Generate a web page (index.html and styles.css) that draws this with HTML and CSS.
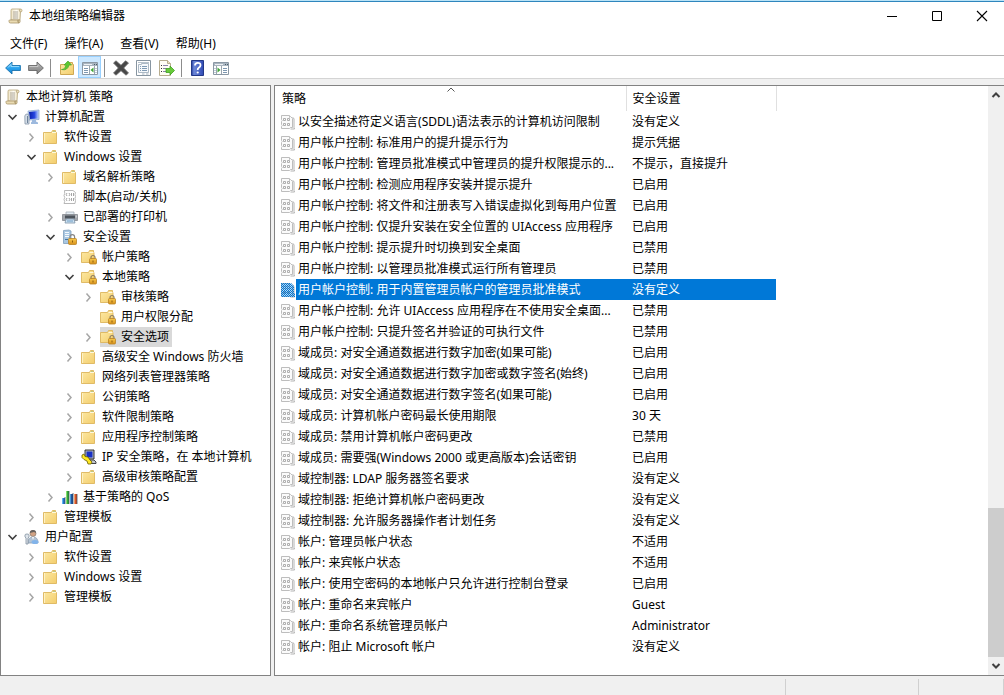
FILE: index.html
```html
<!DOCTYPE html>
<html lang="zh-CN">
<head>
<meta charset="utf-8">
<meta name="viewport" content="width=device-width, initial-scale=1">
<title>本地组策略编辑器</title>
<link rel="stylesheet" href="styles.css">
</head>
<body>
<svg class="sprite" aria-hidden="true">
  <defs>
    <linearGradient id="g-folder" x1="0" y1="0" x2="1" y2="1"><stop offset="0" stop-color="#fdeaa6"/><stop offset="1" stop-color="#f3cd6c"/></linearGradient>
    <linearGradient id="g-paper" x1="0" y1="0" x2="1" y2="0"><stop offset="0" stop-color="#efe3c4"/><stop offset=".5" stop-color="#fffdf6"/><stop offset="1" stop-color="#e6d7ae"/></linearGradient>
    <linearGradient id="g-lock" x1="0" y1="0" x2="0" y2="1"><stop offset="0" stop-color="#f8c94c"/><stop offset="1" stop-color="#d8911b"/></linearGradient>
    <linearGradient id="g-blue" x1="0" y1="0" x2="0" y2="1"><stop offset="0" stop-color="#7fd0fa"/><stop offset=".5" stop-color="#2ba3ee"/><stop offset="1" stop-color="#1583d2"/></linearGradient>
    <linearGradient id="g-gray" x1="0" y1="0" x2="0" y2="1"><stop offset="0" stop-color="#b8b8b8"/><stop offset="1" stop-color="#7c7c7c"/></linearGradient>
    <linearGradient id="g-screen" x1="0" y1="0" x2="1" y2="0"><stop offset="0" stop-color="#0a20a8"/><stop offset=".6" stop-color="#2444e0"/><stop offset="1" stop-color="#a9c2fb"/></linearGradient>
    <linearGradient id="g-help" x1="0" y1="0" x2="1" y2="0"><stop offset="0" stop-color="#20389a"/><stop offset=".2" stop-color="#6c87d8"/><stop offset="1" stop-color="#2f49b4"/></linearGradient>
    <pattern id="p-select" width="2" height="2" patternUnits="userSpaceOnUse"><path d="M0 0h1v1H0zM1 1h1v1H1z" fill="#0078d7"/></pattern>
  </defs>
  <symbol id="i-scroll" viewBox="0 0 16 16">
    <path d="M4 1h8.500q1.500 0 1.500 1.500T12.500 4L12 12H3V2.500Q3 1 4 1z" fill="url(#g-paper)" stroke="#b5a47a" stroke-width=".8"/>
    <path d="M1.500 12H10q0 3 1 3H2.500Q1 15 1 13.500T1.500 12zM10 12h2q.5 3-1 3t-1-3z" fill="#eadbb2" stroke="#a8966a" stroke-width=".8"/>
    <path d="M12 1.200q-1 1.300.3 2.800" fill="none" stroke="#a8966a" stroke-width=".8"/>
    <path d="M5 4h5M5 6h5M5 8h5M5 10h5" stroke="#a39c8e" stroke-width=".9"/>
  </symbol>
  <symbol id="i-folder" viewBox="0 0 16 16">
    <path d="M.5 3.500h8l1-2h3v2h1v11H.5z" fill="url(#g-folder)" stroke="#dcb65c" stroke-width=".9"/>
    <path d="M9 3.500h4" stroke="#fff8dd"/><path d="M10 2.500h2" stroke="#b9c98a"/>
    <path d="M1.500 4v10" stroke="#fff5d2" stroke-width=".8"/>
  </symbol>
  <symbol id="i-lockfolder" viewBox="0 0 16 16">
    <path d="M.5 3.500h7l1-2h4v2h.5v10H.5z" fill="url(#g-folder)" stroke="#dcb65c" stroke-width=".9"/>
    <path d="M8.500 3.500h4" stroke="#fff8dd"/>
    <path d="M10 10V8.500a2 2 0 0 1 4 0V10" fill="none" stroke="#8d7f62" stroke-width="1.200"/>
    <rect x="8.500" y="9.500" width="7" height="5.500" rx="1" fill="url(#g-lock)" stroke="#b98325" stroke-width=".8"/>
    <path d="M12 11.500v2" stroke="#8d5e10"/>
  </symbol>
  <symbol id="i-computer" viewBox="0 0 16 16">
    <path d="M4 2l11-1v9.500L5 11z" fill="#b9cdea" stroke="#8fa9d2" stroke-width=".8"/>
    <path d="M5 3l9-1v7.500l-8 .5z" fill="url(#g-screen)"/>
    <path d="M8 11h4v1.500l2 1V15H7v-1.500l1-1z" fill="#9db9de"/>
    <path d="M.8 7q.5-2 2.200-2t2 2v8H1z" fill="#d5dee8" stroke="#8596a8" stroke-width=".8"/><path d="M3.500 7v7" stroke="#6f849b"/>
  </symbol>
  <symbol id="i-script" viewBox="0 0 16 16">
    <path d="M2.500 1.500h8.500l2.500 2-.5 2 .5 2-.5 2 .5 2-.5 3h-11l.7-2-.7-2 .7-2-.7-2 .7-2z" fill="#fff" stroke="#b0b0b0" stroke-width=".9"/>
    <path d="M5 4l-.8 1.500L5 7M7 4l.8 1.500L7 7M9.500 4v3M11.500 4v3M5 9l-.8 1.500L5 12M7 9l.8 1.500L7 12M9.500 9v3M11.500 9v3" fill="none" stroke="#9a9a9a" stroke-width=".9"/>
  </symbol>
  <symbol id="i-printer" viewBox="0 0 16 16">
    <path d="M4 3h8v3H4z" fill="#e4edf4" stroke="#a4adb6" stroke-width=".8"/>
    <path d="M.5 5.500h15v6H.5z" fill="#a2a6ac" stroke="#85898f" stroke-width=".8"/>
    <path d="M3 6.500h10v3H3z" fill="#4c535b"/><path d="M4 10h8l1 4H3z" fill="#cde2f3" stroke="#7c93a6" stroke-width=".8"/>
    <path d="M5 12h6" stroke="#6f9bc0"/><path d="M14.200 6.500v2" stroke="#e0e1e2"/>
  </symbol>
  <symbol id="i-security" viewBox="0 0 16 16">
    <path d="M1.500 1.500L7 1l2 1v12.500H1.500z" fill="#a9c7e2" stroke="#7f9fbd" stroke-width=".8"/>
    <path d="M3 3.500h4M3 5.500h4M3 7.500h4" stroke="#f4f9fd"/><path d="M3 10.500h3" stroke="#4576a2"/>
    <path d="M8 10V8a2.300 2.300 0 0 1 4.600 0v2" fill="none" stroke="#858585" stroke-width="1.200"/>
    <rect x="6.500" y="9.500" width="8" height="6" rx="1" fill="url(#g-lock)" stroke="#b98325" stroke-width=".8"/><path d="M10.500 11.500v2" stroke="#8d5e10"/>
  </symbol>
  <symbol id="i-ipsec" viewBox="0 0 16 16">
    <path d="M4 1h9v9H4z" fill="#b6bbc3" stroke="#222" stroke-width=".9"/>
    <path d="M5.500 2.500h6v6h-6z" fill="#1931c5"/><path d="M8 11h5l2 2v1.500H8z" fill="#c2c7ce" stroke="#333" stroke-width=".9"/>
    <path d="M1 6l2-1 1 2.500L7 8l2 3 2 2-1 2H7l-1-3-3-1.500-2-2z" fill="#ffe824" stroke="#695e00" stroke-width=".8"/>
  </symbol>
  <symbol id="i-qos" viewBox="0 0 16 16">
    <path d="M0 9h3v6H0z" fill="#2675c9"/><path d="M4 2h3v13H4z" fill="#35a83a"/><path d="M8 5h3v10H8z" fill="#20559d"/><path d="M12 5h3v10h-3z" fill="#d8552a"/>
    <path d="M.5 9v6" stroke="#5fb2ee"/><path d="M4.500 2v13" stroke="#86dd6c"/><path d="M8.500 5v10" stroke="#4c9ad8"/><path d="M12.500 5v10" stroke="#f19a67"/><path d="M3 8v7M7 2v13M11 4v11M15 5v10" stroke="#263b4b" stroke-width=".7"/>
  </symbol>
  <symbol id="i-user" viewBox="0 0 16 16">
    <circle cx="9" cy="4.500" r="3" fill="#d2a283" stroke="#8a7b70" stroke-width=".7"/>
    <path d="M5.800 4q0-3 3.200-3t3 3L10 3z" fill="#67625e"/>
    <path d="M4 14q0-6 5-6t5 6z" fill="#b3c3d4" stroke="#8d9fb2" stroke-width=".8"/><path d="M8 8l1 3 1-3" fill="#fff"/>
    <path d="M1 6q0-1 2-1t2 1v2L4 9v6H2V9L1 8z" fill="#dfe5eb" stroke="#8190a0" stroke-width=".8"/>
    <ellipse cx="11" cy="13" rx="3.500" ry="2" fill="#82b4ea"/>
  </symbol>
  <symbol id="i-policy" viewBox="0 0 16 16">
    <path d="M1.500 1.500h8v2l1-1 2 2v9h-2l-1 1h-8v-2l.7-1-.7-1v-3l.7-1-.7-1z" fill="#fbfbfb" stroke="#b5b5b5" stroke-width=".9"/>
    <path d="M12.500 3.500l1.500 1v9l.500 1.500h-4" fill="none" stroke="#aaa" stroke-width=".9"/>
    <path d="M3.500 4.500v2h2v-2zM7.500 4.500v2h2v-2zM3.500 9.500v2h2v-2zM7.500 9.500v2h2v-2z" fill="none" stroke="#a6a6a6" stroke-width=".9"/>
  </symbol>
  <symbol id="i-policy-on" viewBox="0 0 16 16"><use href="#i-policy"/><path d="M1 1h10l3 3v7h1v4H2l-1-1z" fill="#0078d7" opacity=".25"/><path d="M1 1h10l3 3v7h1v4H2l-1-1z" fill="url(#p-select)"/></symbol>
  <symbol id="i-back" viewBox="0 0 16 16"><path d="M.6 8L7 2v3.500h8.400v5H7V14z" fill="url(#g-blue)" stroke="#1972ae" stroke-width=".9"/><path d="M3 7.500l3-3v2h8" fill="none" stroke="#a4e1ff" stroke-width=".8"/></symbol>
  <symbol id="i-forward" viewBox="0 0 16 16"><path d="M15.400 8L9 2v3.500H.6v5H9V14z" fill="url(#g-gray)" stroke="#686868" stroke-width=".9"/><path d="M1.500 6.500H10v-2" fill="none" stroke="#d0d0d0" stroke-width=".8"/></symbol>
  <symbol id="i-up" viewBox="0 0 16 16"><path d="M1.500 4.500h7l1-2h4v2h1v10h-13z" fill="url(#g-folder)" stroke="#cfa852"/><path d="M2.500 9.500q3.500 0 4.500-4.500H5l4-4 3.500 4H10q-1.500 6-7.500 4.500z" fill="#5cc831" stroke="#49a52c" stroke-width=".7"/></symbol>
  <symbol id="i-console" viewBox="0 0 16 16"><path d="M.5 2.500h15v12H.5z" fill="#fff" stroke="#8b98a4"/><path d="M1 3h14v3H1z" fill="#a9b5c0"/><path d="M2 4.500h8" stroke="#fff" stroke-width=".8"/><path d="M12 4.500h1M14 4.500h1" stroke="#4b5d69"/><path d="M7.500 6v8M12.500 6v8" stroke="#9aa5ae"/><path d="M2 8.500h4M2 10.500h4M2 12.500h4M13.500 8.500h1M13.500 10.500h1M13.500 12.500h1" stroke="#7d97b0"/><path d="M11.500 7.500v5L8.500 10z" fill="#3fa535"/></symbol>
  <symbol id="i-console2" viewBox="0 0 16 16"><path d="M.5 2.500h15v12H.5z" fill="#fff" stroke="#8b98a4"/><path d="M1 3h14v3H1z" fill="#a9b5c0"/><path d="M2 4.500h8" stroke="#fff" stroke-width=".8"/><path d="M12 4.500h1M14 4.500h1" stroke="#4b5d69"/><path d="M3.500 6v8M8.500 6v8" stroke="#9aa5ae"/><path d="M1.500 8.500h1M1.500 10.500h1M1.500 12.500h1M10 8.500h4M10 10.500h4M10 12.500h4" stroke="#7d97b0"/><path d="M4.500 7.500v5l3-2.500z" fill="#3fa535"/></symbol>
  <symbol id="i-delete" viewBox="0 0 16 16"><path d="M.5 3L3 .8l5 4.500 4.500-4.500L15.500 3l-4.800 5 4.800 5-2.500 2.200-5-4.500-5 4.500L.5 13l4.800-5z" fill="#484848" stroke="#707070" stroke-width=".8"/></symbol>
  <symbol id="i-props" viewBox="0 0 16 16"><path d="M.5.5h14v15H.5z" fill="#fff" stroke="#8795a1"/><path d="M2 2.500h11" stroke="#b7c2cc"/><path d="M2.500 4.500h3v-1h7v9h-10z" fill="#f5f8fb" stroke="#a3b1be" stroke-width=".9"/><path d="M4 6.500h1M6 6.500h5M4 8.500h1M6 8.500h5M4 10.500h1M6 10.500h5" stroke="#7f9ab4"/><path d="M6 14h2.500M10 14h2.500" stroke="#a3b1be"/></symbol>
  <symbol id="i-export" viewBox="0 0 16 16"><path d="M.5.5h8l3 3v12H.5z" fill="#fffef5" stroke="#b7ac8e"/><path d="M8.500.5v3h3" fill="#eee2bf" stroke="#b7ac8e"/><path d="M2 5.500h1M2 8.500h1M2 11.500h1" stroke="#333"/><path d="M4 5.500h5M4 8.500h3M4 11.500h5" stroke="#8a83aa"/><path d="M7 8.500h4V6l4.500 4.500L11 15v-2.500H7z" fill="#67ca3a" stroke="#3fa020" stroke-width=".8"/></symbol>
  <symbol id="i-help" viewBox="0 0 16 16"><path d="M1.500.5h12v15h-12z" fill="url(#g-help)" stroke="#223787"/><path d="M5 5.500q0-2.700 2.800-2.700t2.700 2.400q0 1.300-1.500 2.300T7.700 10" fill="none" stroke="#fff" stroke-width="1.800"/><circle cx="7.700" cy="12.500" r="1.100" fill="#fff"/></symbol>
  <symbol id="i-open" viewBox="0 0 14 14"><path d="M3.500 5L7.500 9l4-4" fill="none" stroke="#404040" stroke-width="1.600"/></symbol>
  <symbol id="i-closed" viewBox="0 0 14 14"><path d="M5.500 3.500l3.500 4-3.500 4" fill="none" stroke="#a6a6a6" stroke-width="1.500"/></symbol>
  <symbol id="i-min" viewBox="0 0 12 12"><path d="M1 6.500h10" stroke="#000"/></symbol>
  <symbol id="i-max" viewBox="0 0 12 12"><path d="M1.500 1.500h9v9h-9z" fill="none" stroke="#000"/></symbol>
  <symbol id="i-close" viewBox="0 0 12 12"><path d="M1 1l10 10M11 1L1 11" stroke="#000" stroke-width="1.100"/></symbol>
</svg>

<header class="titlebar">
  <svg class="icon"><use href="#i-scroll"/></svg>
  <h1 class="title">本地组策略编辑器</h1>
  <div class="window-controls">
    <button class="window-button" aria-label="最小化"><svg><use href="#i-min"/></svg></button>
    <button class="window-button" aria-label="最大化"><svg><use href="#i-max"/></svg></button>
    <button class="window-button" aria-label="关闭"><svg><use href="#i-close"/></svg></button>
  </div>
</header>
<nav class="menu">
  <button>文件(F)</button><button>操作(A)</button><button>查看(V)</button><button>帮助(H)</button>
</nav>
<div class="toolbar" role="toolbar">
  <button class="tool" aria-label="后退"><svg class="icon"><use href="#i-back"/></svg></button>
  <button class="tool" aria-label="前进"><svg class="icon"><use href="#i-forward"/></svg></button>
  <span class="separator"></span>
  <button class="tool" aria-label="向上"><svg class="icon"><use href="#i-up"/></svg></button>
  <button class="tool tool-active" aria-label="显示控制台树" aria-pressed="true"><svg class="icon"><use href="#i-console"/></svg></button>
  <span class="separator"></span>
  <button class="tool" aria-label="删除"><svg class="icon"><use href="#i-delete"/></svg></button>
  <button class="tool" aria-label="属性"><svg class="icon"><use href="#i-props"/></svg></button>
  <button class="tool" aria-label="导出列表"><svg class="icon"><use href="#i-export"/></svg></button>
  <span class="separator"></span>
  <button class="tool" aria-label="帮助"><svg class="icon"><use href="#i-help"/></svg></button>
  <button class="tool" aria-label="显示操作窗格"><svg class="icon"><use href="#i-console2"/></svg></button>
</div>

<main class="workspace">
  <nav class="tree-pane">
    <div class="node"><span class="label"><svg class="icon"><use href="#i-scroll"/></svg>本地计算机 策略</span></div>
    <ul class="tree">
      <li><div class="node"><button class="toggle" aria-label="折叠"><svg><use href="#i-open"/></svg></button><span class="label"><svg class="icon"><use href="#i-computer"/></svg>计算机配置</span></div>
        <ul>
          <li><div class="node"><button class="toggle" aria-label="展开"><svg><use href="#i-closed"/></svg></button><span class="label"><svg class="icon"><use href="#i-folder"/></svg>软件设置</span></div></li>
          <li><div class="node"><button class="toggle" aria-label="折叠"><svg><use href="#i-open"/></svg></button><span class="label"><svg class="icon"><use href="#i-folder"/></svg>Windows 设置</span></div>
            <ul>
              <li><div class="node"><button class="toggle" aria-label="展开"><svg><use href="#i-closed"/></svg></button><span class="label"><svg class="icon"><use href="#i-folder"/></svg>域名解析策略</span></div></li>
              <li><div class="node"><span class="toggle"></span><span class="label"><svg class="icon"><use href="#i-script"/></svg>脚本(启动/关机)</span></div></li>
              <li><div class="node"><button class="toggle" aria-label="展开"><svg><use href="#i-closed"/></svg></button><span class="label"><svg class="icon"><use href="#i-printer"/></svg>已部署的打印机</span></div></li>
              <li><div class="node"><button class="toggle" aria-label="折叠"><svg><use href="#i-open"/></svg></button><span class="label"><svg class="icon"><use href="#i-security"/></svg>安全设置</span></div>
                <ul>
                  <li><div class="node"><button class="toggle" aria-label="展开"><svg><use href="#i-closed"/></svg></button><span class="label"><svg class="icon"><use href="#i-lockfolder"/></svg>帐户策略</span></div></li>
                  <li><div class="node"><button class="toggle" aria-label="折叠"><svg><use href="#i-open"/></svg></button><span class="label"><svg class="icon"><use href="#i-lockfolder"/></svg>本地策略</span></div>
                    <ul>
                      <li><div class="node"><button class="toggle" aria-label="展开"><svg><use href="#i-closed"/></svg></button><span class="label"><svg class="icon"><use href="#i-lockfolder"/></svg>审核策略</span></div></li>
                      <li><div class="node"><span class="toggle"></span><span class="label"><svg class="icon"><use href="#i-lockfolder"/></svg>用户权限分配</span></div></li>
                      <li><div class="node"><button class="toggle" aria-label="展开"><svg><use href="#i-closed"/></svg></button><span class="label label-selected"><svg class="icon"><use href="#i-lockfolder"/></svg>安全选项</span></div></li>
                    </ul>
                  </li>
                  <li><div class="node"><button class="toggle" aria-label="展开"><svg><use href="#i-closed"/></svg></button><span class="label"><svg class="icon"><use href="#i-folder"/></svg>高级安全 Windows 防火墙</span></div></li>
                  <li><div class="node"><span class="toggle"></span><span class="label"><svg class="icon"><use href="#i-folder"/></svg>网络列表管理器策略</span></div></li>
                  <li><div class="node"><button class="toggle" aria-label="展开"><svg><use href="#i-closed"/></svg></button><span class="label"><svg class="icon"><use href="#i-folder"/></svg>公钥策略</span></div></li>
                  <li><div class="node"><button class="toggle" aria-label="展开"><svg><use href="#i-closed"/></svg></button><span class="label"><svg class="icon"><use href="#i-folder"/></svg>软件限制策略</span></div></li>
                  <li><div class="node"><button class="toggle" aria-label="展开"><svg><use href="#i-closed"/></svg></button><span class="label"><svg class="icon"><use href="#i-folder"/></svg>应用程序控制策略</span></div></li>
                  <li><div class="node"><button class="toggle" aria-label="展开"><svg><use href="#i-closed"/></svg></button><span class="label"><svg class="icon"><use href="#i-ipsec"/></svg>IP 安全策略，在 本地计算机</span></div></li>
                  <li><div class="node"><button class="toggle" aria-label="展开"><svg><use href="#i-closed"/></svg></button><span class="label"><svg class="icon"><use href="#i-folder"/></svg>高级审核策略配置</span></div></li>
                </ul>
              </li>
              <li><div class="node"><button class="toggle" aria-label="展开"><svg><use href="#i-closed"/></svg></button><span class="label"><svg class="icon"><use href="#i-qos"/></svg>基于策略的 QoS</span></div></li>
            </ul>
          </li>
          <li><div class="node"><button class="toggle" aria-label="展开"><svg><use href="#i-closed"/></svg></button><span class="label"><svg class="icon"><use href="#i-folder"/></svg>管理模板</span></div></li>
        </ul>
      </li>
      <li><div class="node"><button class="toggle" aria-label="折叠"><svg><use href="#i-open"/></svg></button><span class="label"><svg class="icon"><use href="#i-user"/></svg>用户配置</span></div>
        <ul>
          <li><div class="node"><button class="toggle" aria-label="展开"><svg><use href="#i-closed"/></svg></button><span class="label"><svg class="icon"><use href="#i-folder"/></svg>软件设置</span></div></li>
          <li><div class="node"><button class="toggle" aria-label="展开"><svg><use href="#i-closed"/></svg></button><span class="label"><svg class="icon"><use href="#i-folder"/></svg>Windows 设置</span></div></li>
          <li><div class="node"><button class="toggle" aria-label="展开"><svg><use href="#i-closed"/></svg></button><span class="label"><svg class="icon"><use href="#i-folder"/></svg>管理模板</span></div></li>
        </ul>
      </li>
    </ul>
  </nav>

  <section class="list-pane">
    <div class="list-scroll">
      <table class="policies">
        <colgroup><col class="col-icon"><col class="col-name"><col class="col-setting"></colgroup>
        <thead>
          <tr><th colspan="2" class="head-name">策略<svg class="sort" viewBox="0 0 8 5"><path d="M.5 4.500L4 1l3.500 3.500" fill="none" stroke="#555"/></svg></th><th class="setting">安全设置</th></tr>
        </thead>
        <tbody>
          <tr><td><svg class="icon"><use href="#i-policy"/></svg></td><td class="name">以安全描述符定义语言(SDDL)语法表示的计算机访问限制</td><td class="setting">没有定义</td></tr>
          <tr><td><svg class="icon"><use href="#i-policy"/></svg></td><td class="name">用户帐户控制: 标准用户的提升提示行为</td><td class="setting">提示凭据</td></tr>
          <tr><td><svg class="icon"><use href="#i-policy"/></svg></td><td class="name">用户帐户控制: 管理员批准模式中管理员的提升权限提示的...</td><td class="setting">不提示，直接提升</td></tr>
          <tr><td><svg class="icon"><use href="#i-policy"/></svg></td><td class="name">用户帐户控制: 检测应用程序安装并提示提升</td><td class="setting">已启用</td></tr>
          <tr><td><svg class="icon"><use href="#i-policy"/></svg></td><td class="name">用户帐户控制: 将文件和注册表写入错误虚拟化到每用户位置</td><td class="setting">已启用</td></tr>
          <tr><td><svg class="icon"><use href="#i-policy"/></svg></td><td class="name">用户帐户控制: 仅提升安装在安全位置的 UIAccess 应用程序</td><td class="setting">已启用</td></tr>
          <tr><td><svg class="icon"><use href="#i-policy"/></svg></td><td class="name">用户帐户控制: 提示提升时切换到安全桌面</td><td class="setting">已禁用</td></tr>
          <tr><td><svg class="icon"><use href="#i-policy"/></svg></td><td class="name">用户帐户控制: 以管理员批准模式运行所有管理员</td><td class="setting">已禁用</td></tr>
          <tr class="selected"><td><svg class="icon"><use href="#i-policy-on"/></svg></td><td class="name">用户帐户控制: 用于内置管理员帐户的管理员批准模式</td><td class="setting">没有定义</td></tr>
          <tr><td><svg class="icon"><use href="#i-policy"/></svg></td><td class="name">用户帐户控制: 允许 UIAccess 应用程序在不使用安全桌面...</td><td class="setting">已禁用</td></tr>
          <tr><td><svg class="icon"><use href="#i-policy"/></svg></td><td class="name">用户帐户控制: 只提升签名并验证的可执行文件</td><td class="setting">已禁用</td></tr>
          <tr><td><svg class="icon"><use href="#i-policy"/></svg></td><td class="name">域成员: 对安全通道数据进行数字加密(如果可能)</td><td class="setting">已启用</td></tr>
          <tr><td><svg class="icon"><use href="#i-policy"/></svg></td><td class="name">域成员: 对安全通道数据进行数字加密或数字签名(始终)</td><td class="setting">已启用</td></tr>
          <tr><td><svg class="icon"><use href="#i-policy"/></svg></td><td class="name">域成员: 对安全通道数据进行数字签名(如果可能)</td><td class="setting">已启用</td></tr>
          <tr><td><svg class="icon"><use href="#i-policy"/></svg></td><td class="name">域成员: 计算机帐户密码最长使用期限</td><td class="setting">30 天</td></tr>
          <tr><td><svg class="icon"><use href="#i-policy"/></svg></td><td class="name">域成员: 禁用计算机帐户密码更改</td><td class="setting">已禁用</td></tr>
          <tr><td><svg class="icon"><use href="#i-policy"/></svg></td><td class="name">域成员: 需要强(Windows 2000 或更高版本)会话密钥</td><td class="setting">已启用</td></tr>
          <tr><td><svg class="icon"><use href="#i-policy"/></svg></td><td class="name">域控制器: LDAP 服务器签名要求</td><td class="setting">没有定义</td></tr>
          <tr><td><svg class="icon"><use href="#i-policy"/></svg></td><td class="name">域控制器: 拒绝计算机帐户密码更改</td><td class="setting">没有定义</td></tr>
          <tr><td><svg class="icon"><use href="#i-policy"/></svg></td><td class="name">域控制器: 允许服务器操作者计划任务</td><td class="setting">没有定义</td></tr>
          <tr><td><svg class="icon"><use href="#i-policy"/></svg></td><td class="name">帐户: 管理员帐户状态</td><td class="setting">不适用</td></tr>
          <tr><td><svg class="icon"><use href="#i-policy"/></svg></td><td class="name">帐户: 来宾帐户状态</td><td class="setting">不适用</td></tr>
          <tr><td><svg class="icon"><use href="#i-policy"/></svg></td><td class="name">帐户: 使用空密码的本地帐户只允许进行控制台登录</td><td class="setting">已启用</td></tr>
          <tr><td><svg class="icon"><use href="#i-policy"/></svg></td><td class="name">帐户: 重命名来宾帐户</td><td class="setting">Guest</td></tr>
          <tr><td><svg class="icon"><use href="#i-policy"/></svg></td><td class="name">帐户: 重命名系统管理员帐户</td><td class="setting">Administrator</td></tr>
          <tr><td><svg class="icon"><use href="#i-policy"/></svg></td><td class="name">帐户: 阻止 Microsoft 帐户</td><td class="setting">没有定义</td></tr>
        </tbody>
      </table>
    </div>
    <div class="scrollbar">
      <button class="scroll-arrow" aria-label="向上滚动"><svg viewBox="0 0 10 10"><path d="M1.500 7L5 3.500 8.500 7" fill="none" stroke="#404040" stroke-width="2"/></svg></button>
      <div class="scroll-track"><div class="scroll-thumb"></div></div>
      <button class="scroll-arrow" aria-label="向下滚动"><svg viewBox="0 0 10 10"><path d="M1.500 3L5 6.500 8.500 3" fill="none" stroke="#404040" stroke-width="2"/></svg></button>
    </div>
  </section>
</main>
<footer class="statusbar"><span></span><span></span><span></span></footer>
</body>
</html>
```
FILE: styles.css
```css
* {
  box-sizing: border-box;
}

body {
  margin: 0;
  min-height: 100vh;
  display: flex;
  flex-direction: column;
  background: #f0f0f0;
  color: #000;
  font: 12px/20px "Noto Sans", "Noto Sans CJK SC", sans-serif;
}

button {
  margin: 0;
  padding: 0;
  border: 0;
  background: none;
  color: inherit;
  font: inherit;
}

svg {
  display: block;
  flex: none;
}

ul {
  margin: 0;
  padding: 0;
  list-style: none;
}

.sprite {
  position: absolute;
  width: 0;
  height: 0;
}

.icon {
  width: 16px;
  height: 16px;
}

/* Title bar */
.titlebar {
  display: flex;
  align-items: center;
  gap: 5px;
  height: 33px;
  padding: 0 0 2px 8px;
  border-top: 1px solid #b9e3f7;
  background: #fff;
  box-shadow: inset 0 1px #2f86bd;
}

.title {
  margin: 0;
  font-size: 12px;
  font-weight: 400;
}

.window-controls {
  display: flex;
  align-self: stretch;
  margin-left: auto;
}

.window-button {
  display: flex;
  align-items: center;
  justify-content: center;
  width: 45px;
}

.window-button svg {
  width: 12px;
  height: 12px;
}

/* Menu and toolbar */
.menu {
  display: flex;
  align-items: center;
  gap: 17px;
  height: 23px;
  padding-left: 10px;
  border-bottom: 1px solid #b4b4b4;
  background: #fff;
}

.toolbar {
  display: flex;
  height: 23px;
  padding-left: 1px;
  border-bottom: 1px solid #d4d4d4;
  background: #fff;
}

.tool {
  display: flex;
  align-items: center;
  justify-content: center;
  width: 23px;
  padding-top: 2px;
}

.tool-active {
  border: 1px solid #99d1ff;
  background: #cce8ff;
}

.separator {
  width: 1px;
  height: 18px;
  margin: 3px 4px 0 3px;
  background: #8c8c8c;
}

/* Panes */
.workspace {
  display: flex;
  flex: 1;
  gap: 3px;
  padding-top: 6px;
}

.tree-pane {
  flex: 0 0 27%;
  padding: 1px 0 0 4px;
  border: 1px solid #828282;
  background: #fff;
  overflow: hidden;
}

.tree ul {
  padding-left: 19px;
}

.node {
  display: flex;
  align-items: center;
  height: 20px;
  white-space: nowrap;
}

.toggle {
  flex: none;
  width: 19px;
}

.toggle svg {
  width: 14px;
  height: 14px;
}

.label {
  display: flex;
  align-items: center;
  gap: 5px;
  height: 20px;
}

.label-selected {
  padding-right: 3px;
  background: #d9d9d9;
}

.list-pane {
  display: flex;
  flex: 1;
  min-width: 0;
  border: 1px solid #828282;
  border-right: 0;
  background: #fff;
}

.list-scroll {
  flex: 1;
  min-width: 0;
  overflow: hidden;
}

.policies {
  width: 501px;
  border-collapse: collapse;
  table-layout: fixed;
  white-space: nowrap;
}

.col-icon {
  width: 21px;
}

.col-name {
  width: 330px;
}

.col-setting {
  width: 150px;
}

.policies th {
  height: 25px;
  padding: 1px 0 0 7px;
  border-right: 1px solid #e0e0e0;
  font-weight: 400;
  text-align: left;
}

.head-name {
  position: relative;
}

.sort {
  position: absolute;
  top: 1px;
  left: 49%;
  width: 8px;
  height: 5px;
}

.policies td {
  height: 21px;
  padding: 0 0 0 5px;
}

.policies .name {
  padding-left: 2px;
}

.policies .setting {
  padding-left: 6px;
}

.selected .name,
.selected .setting {
  background: #0078d7;
  color: #fff;
}

.scrollbar {
  display: flex;
  flex-direction: column;
  width: 16px;
  background: #f0f0f0;
}

.scroll-arrow {
  display: flex;
  align-items: center;
  justify-content: center;
  height: 18px;
}

.scroll-arrow svg {
  width: 10px;
  height: 10px;
}

.scroll-track {
  display: flex;
  flex: 1;
  flex-direction: column;
  justify-content: flex-end;
}

.scroll-thumb {
  height: 27%;
  background: #cdcdcd;
}

/* Status bar */
.statusbar {
  display: grid;
  grid-template-columns: 1fr 133px 85px;
  height: 19px;
  padding-top: 3px;
}

.statusbar span {
  border-right: 1px solid #d0d0d0;
}
```
